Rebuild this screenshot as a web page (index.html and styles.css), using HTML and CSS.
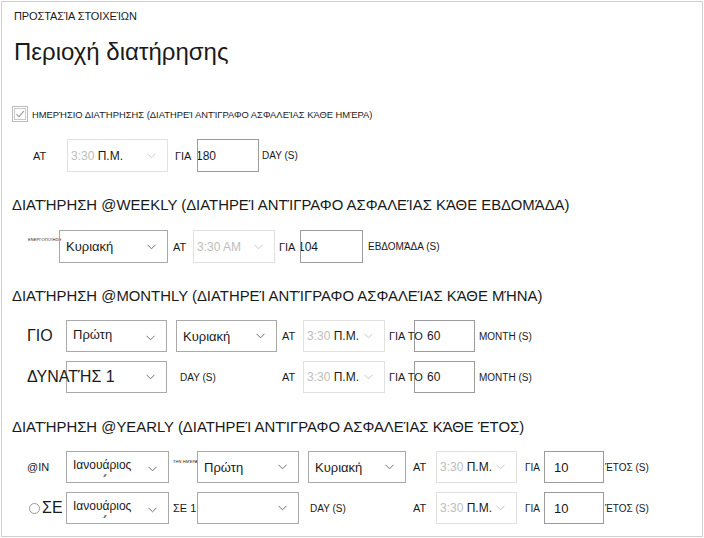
FILE: index.html
```html
<!DOCTYPE html>
<html lang="el">
<head>
<meta charset="utf-8">
<title>Περιοχή διατήρησης</title>
<link rel="stylesheet" href="styles.css">
</head>
<body>
<div class="page">
  <p class="eyebrow">ΠΡΟΣΤΑΣΊΑ ΣΤΟΙΧΕΊΩΝ</p>
  <h1 class="title">Περιοχή διατήρησης</h1>

  <div class="check-row">
    <span class="checkbox"><svg width="16" height="16" viewBox="0 0 16 16"><rect x="0.5" y="0.5" width="15" height="15" fill="none" stroke="#7a7a7a" stroke-dasharray="1 1"/><rect x="2.5" y="2.5" width="11" height="11" fill="none" stroke="#c8c8c8"/><path d="M4.5 8.2 L7 10.6 L11.8 5.2" fill="none" stroke="#9a9a9a" stroke-width="1.1"/></svg></span>
    <span class="check-label">ΗΜΕΡΉΣΙΟ ΔΙΑΤΉΡΗΣΗΣ (ΔΙΑΤΗΡΕΊ ΑΝΤΊΓΡΑΦΟ ΑΣΦΑΛΕΊΑΣ ΚΆΘΕ ΗΜΈΡΑ)</span>
  </div>

  <div class="row daily">
    <span class="lbl d-at">AT</span>
    <div class="select time disabled w-d-time"><span class="val"><span class="muted">3:30</span> Π.Μ.</span><svg class="chev" width="9" height="6" viewBox="0 0 9 6"><path d="M0.5 0.8 L4.5 4.8 L8.5 0.8" fill="none" stroke="currentColor"/></svg></div>
    <span class="lbl d-for">ΓΙΑ</span>
    <input class="field d-field" type="text" value="180">
    <span class="unit d-unit">DAY (S)</span>
  </div>

  <h2 class="section">ΔΙΑΤΉΡΗΣΗ @WEEKLY (ΔΙΑΤΗΡΕΊ ΑΝΤΊΓΡΑΦΟ ΑΣΦΑΛΕΊΑΣ ΚΆΘΕ ΕΒΔΟΜΆΔΑ)</h2>
  <div class="row weekly">
    <span class="tiny w-tiny">ΕΝΕΡΓΟΠΟΊΗΣΗ</span>
    <div class="select w-day"><span class="val">Κυριακή</span><svg class="chev" width="9" height="6" viewBox="0 0 9 6"><path d="M0.5 0.8 L4.5 4.8 L8.5 0.8" fill="none" stroke="currentColor"/></svg></div>
    <span class="lbl w-at">AT</span>
    <div class="select time disabled w-time"><span class="val muted">3:30 AM</span><svg class="chev" width="9" height="6" viewBox="0 0 9 6"><path d="M0.5 0.8 L4.5 4.8 L8.5 0.8" fill="none" stroke="currentColor"/></svg></div>
    <span class="lbl w-for">ΓΙΑ</span>
    <input class="field w-field" type="text" value="104">
    <span class="unit w-unit">ΕΒΔΟΜΆΔΑ (S)</span>
  </div>

  <h2 class="section">ΔΙΑΤΉΡΗΣΗ @MONTHLY (ΔΙΑΤΗΡΕΊ ΑΝΤΊΓΡΑΦΟ ΑΣΦΑΛΕΊΑΣ ΚΆΘΕ ΜΉΝΑ)</h2>
  <div class="grid monthly">
    <span class="big">ΓΙΟ</span>
    <div class="select top"><span class="val">Πρώτη</span><svg class="chev" width="9" height="6" viewBox="0 0 9 6"><path d="M0.5 0.8 L4.5 4.8 L8.5 0.8" fill="none" stroke="currentColor"/></svg></div>
    <span></span>
    <div class="select"><span class="val">Κυριακή</span><svg class="chev" width="9" height="6" viewBox="0 0 9 6"><path d="M0.5 0.8 L4.5 4.8 L8.5 0.8" fill="none" stroke="currentColor"/></svg></div>
    <span class="lbl pad5">AT</span>
    <div class="select time disabled"><span class="val"><span class="muted">3:30</span> Π.Μ.</span><svg class="chev" width="9" height="6" viewBox="0 0 9 6"><path d="M0.5 0.8 L4.5 4.8 L8.5 0.8" fill="none" stroke="currentColor"/></svg></div>
    <span class="lbl pad4 over">ΓΙΑ ΤΟ</span>
    <input class="field m-field" type="text" value="60">
    <span class="unit pad4">MONTH (S)</span>

    <span class="big over">ΔΥΝΑΤΉΣ 1</span>
    <div class="select"><span class="val"></span><svg class="chev" width="9" height="6" viewBox="0 0 9 6"><path d="M0.5 0.8 L4.5 4.8 L8.5 0.8" fill="none" stroke="currentColor"/></svg></div>
    <span></span>
    <span class="unit pad4">DAY (S)</span>
    <span class="lbl pad5">AT</span>
    <div class="select time disabled"><span class="val"><span class="muted">3:30</span> Π.Μ.</span><svg class="chev" width="9" height="6" viewBox="0 0 9 6"><path d="M0.5 0.8 L4.5 4.8 L8.5 0.8" fill="none" stroke="currentColor"/></svg></div>
    <span class="lbl pad4 over">ΓΙΑ ΤΟ</span>
    <input class="field m-field" type="text" value="60">
    <span class="unit pad4">MONTH (S)</span>
  </div>

  <h2 class="section section-y">ΔΙΑΤΉΡΗΣΗ @YEARLY (ΔΙΑΤΗΡΕΊ ΑΝΤΊΓΡΑΦΟ ΑΣΦΑΛΕΊΑΣ ΚΆΘΕ ΈΤΟΣ)</h2>
  <div class="grid yearly">
    <span class="lbl y-in">@IN</span>
    <div class="select top month"><span class="val">Ιανουάριος</span><svg class="chev" width="9" height="6" viewBox="0 0 9 6"><path d="M0.5 0.8 L4.5 4.8 L8.5 0.8" fill="none" stroke="currentColor"/></svg></div>
    <span class="tiny y-tiny">ΤΗΝ ΗΜΈΡΑ</span>
    <div class="select"><span class="val">Πρώτη</span><svg class="chev" width="9" height="6" viewBox="0 0 9 6"><path d="M0.5 0.8 L4.5 4.8 L8.5 0.8" fill="none" stroke="currentColor"/></svg></div>
    <span></span>
    <div class="select"><span class="val">Κυριακή</span><svg class="chev" width="9" height="6" viewBox="0 0 9 6"><path d="M0.5 0.8 L4.5 4.8 L8.5 0.8" fill="none" stroke="currentColor"/></svg></div>
    <span class="lbl pad7">AT</span>
    <div class="select time disabled"><span class="val"><span class="muted">3:30</span> Π.Μ.</span><svg class="chev" width="9" height="6" viewBox="0 0 9 6"><path d="M0.5 0.8 L4.5 4.8 L8.5 0.8" fill="none" stroke="currentColor"/></svg></div>
    <span class="unit pad8">ΓΙΑ</span>
    <input class="field y-field" type="text" value="10">
    <span class="unit pad1">ΈΤΟΣ (S)</span>

    <span class="radio-lbl"><span class="radio"></span><span class="big">ΣΕ</span></span>
    <div class="select top month"><span class="val">Ιανουάριος</span><svg class="chev" width="9" height="6" viewBox="0 0 9 6"><path d="M0.5 0.8 L4.5 4.8 L8.5 0.8" fill="none" stroke="currentColor"/></svg></div>
    <span class="lbl pad4">ΣΕ 1</span>
    <div class="select"><span class="val"></span><svg class="chev" width="9" height="6" viewBox="0 0 9 6"><path d="M0.5 0.8 L4.5 4.8 L8.5 0.8" fill="none" stroke="currentColor"/></svg></div>
    <span></span>
    <span class="unit pad2">DAY (S)</span>
    <span class="lbl pad7">AT</span>
    <div class="select time disabled"><span class="val"><span class="muted">3:30</span> Π.Μ.</span><svg class="chev" width="9" height="6" viewBox="0 0 9 6"><path d="M0.5 0.8 L4.5 4.8 L8.5 0.8" fill="none" stroke="currentColor"/></svg></div>
    <span class="unit pad8">ΓΙΑ</span>
    <input class="field y-field" type="text" value="10">
    <span class="unit pad1">ΈΤΟΣ (S)</span>
  </div>
</div>
</body>
</html>
```
FILE: styles.css
```css
* { box-sizing: border-box; }

body {
  margin: 0;
  background: #fff;
  font-family: "Liberation Sans", Arial, sans-serif;
  color: #1a1a1a;
}

.page {
  margin: 1px 0 0 1px;
  width: 702px;
  height: 536px;
  border: 1px solid #d0d0d0;
  overflow: hidden;
}

.eyebrow {
  margin: 7px 0 0 12px;
  font-size: 11px;
  line-height: 14px;
  letter-spacing: -0.1px;
}

.title {
  margin: 14px 0 0 12px;
  font-size: 24px;
  font-weight: 400;
  line-height: 29px;
}

.check-row {
  display: flex;
  align-items: center;
  height: 18px;
  margin-top: 39px;
  padding-left: 10px;
}

.checkbox { display: flex; width: 16px; height: 16px; }

.check-label {
  margin-left: 4px;
  font-size: 9.4px;
}

.row {
  display: flex;
  align-items: center;
  height: 33px;
}

.daily { margin-top: 16px; padding-left: 31px; }
.weekly { margin-top: 15px; padding-left: 26px; }

.section {
  margin: 23px 0 0 10px;
  font-size: 14.9px;
  font-weight: 400;
  line-height: 20px;
  white-space: nowrap;
}

.section-y { margin-top: 24px; }

.lbl { font-size: 11px; white-space: nowrap; }
.unit { font-size: 10px; white-space: nowrap; }
.tiny { font-size: 4px; white-space: nowrap; letter-spacing: 0.1px; }
.big { font-size: 16px; white-space: nowrap; }
.muted { color: #bdbdbd; }
.over { position: relative; z-index: 1; }

.select {
  display: flex;
  align-items: center;
  justify-content: space-between;
  height: 100%;
  padding: 0 11px 0 6px;
  border: 1px solid #a9a9a9;
  font-size: 13px;
  color: #1a1a1a;
}

.select .chev { color: #707070; flex: none; }
.select.top { align-items: flex-start; padding-top: 6px; }
.select.top .chev { margin-top: 8px; }
.select.month { position: relative; }
.select.month::after {
  content: "";
  position: absolute;
  left: 37px;
  top: 22px;
  width: 2px;
  height: 3px;
  background: #777;
  transform: skewX(-30deg);
}
.select.month .val { font-size: 12px; }

.select.time { font-size: 12px; padding-left: 3px; }
.select.disabled { border-color: #e1e1e1; }
.select.disabled .chev { color: #c8c8c8; }

.field {
  height: 100%;
  margin: 0;
  padding: 0 0 0 1px;
  border: 1px solid #9c9c9c;
  background: transparent;
  font: 12px "Liberation Sans", Arial, sans-serif;
  color: #1a1a1a;
  outline: none;
}

/* daily */
.d-at { width: 34px; }
.w-d-time { width: 101px; height: 33px; }
.d-for { width: 22px; margin-left: 7px; }
.d-field { width: 62px; padding-left: 0; text-indent: -2px; }
.d-unit { margin-left: 3px; }

/* weekly */
.w-tiny { width: 31px; align-self: flex-start; margin-top: 7px; }
.w-day { width: 109px; }
.w-at { width: 25px; padding-left: 5px; }
.w-time { width: 82px; }
.w-for { width: 25px; padding-left: 4px; }
.w-field { width: 63px; padding-left: 0; text-indent: -3px; }
.w-unit { margin-left: 5px; }

/* grids */
.grid {
  display: grid;
  align-items: center;
  grid-auto-rows: 32px;
  row-gap: 9px;
  padding-left: 25px;
}

.grid > .select, .grid > .field { height: 32px; }

.monthly {
  margin-top: 14px;
  grid-template-columns: 39px 101px 9px 101px 26px 82px 29px 61px auto;
}

.yearly {
  margin-top: 14px;
  grid-template-columns: 39px 103px 28px 102px 9px 98px 30px 81px 27px 60px auto;
}

.pad1 { padding-left: 1px; }
.pad2 { padding-left: 2px; }
.pad4 { padding-left: 4px; }
.pad5 { padding-left: 5px; }
.pad7 { padding-left: 7px; }
.pad8 { padding-left: 8px; }

.m-field { padding-left: 12px; }
.y-field { padding-left: 9px; font-size: 13px; }

.y-in { font-size: 11px; }
.y-tiny { padding-left: 4px; align-self: start; margin-top: 8px; }

.radio-lbl { display: flex; align-items: center; margin-left: 2px; }
.radio {
  width: 11px;
  height: 11px;
  border: 1px solid #9a9a9a;
  border-radius: 50%;
  margin-right: 2px;
}
```
